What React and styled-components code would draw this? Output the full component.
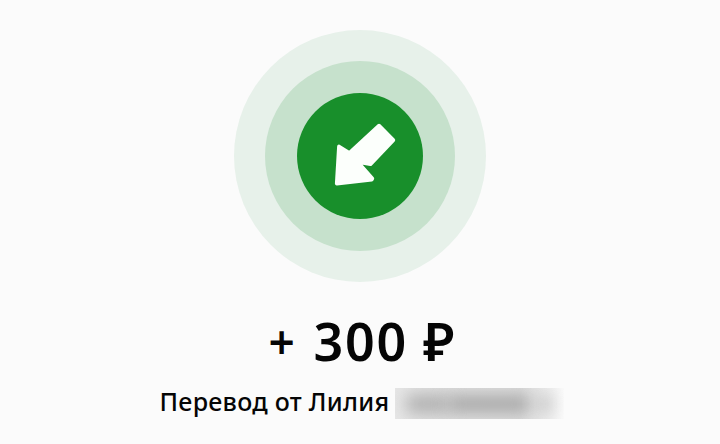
import React from "react"
import styled, {createGlobalStyle} from "styled-components"

const GlobalStyle = createGlobalStyle`
  * {
    box-sizing: border-box;
  }

  body {
    margin: 0;
    background: #fbfbfb;
    color: #050505;
    font-family: "Noto Sans", "Open Sans", sans-serif;
  }
`

const Screen = styled.main`
  height: 444px;
  padding-top: 30px;
  overflow: hidden;
  display: flex;
  flex-direction: column;
  align-items: center;
`

const Ring = styled.div`
  flex-shrink: 0;
  width: ${props => props.$size}px;
  height: ${props => props.$size}px;
  border-radius: 50%;
  background: ${props => props.$color};
  display: flex;
  align-items: center;
  justify-content: center;
`

const Amount = styled.h1`
  width: 186px;
  margin: 23px 0 0 3px;
  display: flex;
  align-items: center;
  font-size: 52px;
  font-weight: 600;
  line-height: 72px;
  white-space: nowrap;
`

const Sign = styled.span`
  width: 45px;
  font-size: 46px;
`

const Digits = styled.span`
  width: 110px;
  letter-spacing: 1.8px;
`

const Currency = styled.span`
  font-size: 53px;
`

const Sender = styled.div`
  width: 404px;
  margin: 11px 0 0 3px;
  display: flex;
  align-items: flex-start;
`

const SenderText = styled.span`
  width: 235px;
  font-size: 25px;
  font-weight: 500;
  line-height: 26px;
  letter-spacing: 0.28px;
  white-space: nowrap;
`

const HiddenName = styled.span`
  width: 169px;
  height: 31px;
  overflow: hidden;
  display: flex;
  align-items: center;
  background: linear-gradient(90deg, #e6e6e6 0, #dedede 30px, #dadada 125px, #ebebeb 152px, #fafafa 169px);
`

const Smudge = styled.span`
  flex-shrink: 0;
  width: ${props => props.$width}px;
  height: 14px;
  margin-left: ${props => props.$gap}px;
  background: ${props => props.$color};
  filter: blur(8px);
`

function ArrowIcon(){
  return(
    <svg width="126" height="126" viewBox="0 0 126 126" aria-hidden="true">
      <path
        d="M42 53.5 L52.5 60 L82 32.7 L96.3 47.2 L73.5 71.2 L60.5 68.8 L75.3 85.4 L74.8 86.5 L39.8 90.5 Z"
        fill="#fcfffc"
        stroke="#fcfffc"
        strokeWidth="3.8"
        strokeLinejoin="round"
      />
    </svg>
  )
}

function App(){
  return(
    <Screen>
      <GlobalStyle />
      <Ring $size={252} $color="#e7f1ea">
        <Ring $size={190} $color="#c6e1cc">
          <Ring $size={126} $color="#188f2b">
            <ArrowIcon />
          </Ring>
        </Ring>
      </Ring>
      <Amount>
        <Sign>+</Sign>
        <Digits>300</Digits>
        <Currency>₽</Currency>
      </Amount>
      <Sender>
        <SenderText>Перевод от Лилия</SenderText>
        <HiddenName>
          <Smudge $width={42} $gap={12} $color="#a8a8a8" />
          <Smudge $width={80} $gap={0} $color="#a0a0a0" />
          <Smudge $width={13} $gap={9} $color="#bfbfbf" />
        </HiddenName>
      </Sender>
    </Screen>
  )
}

export default App
